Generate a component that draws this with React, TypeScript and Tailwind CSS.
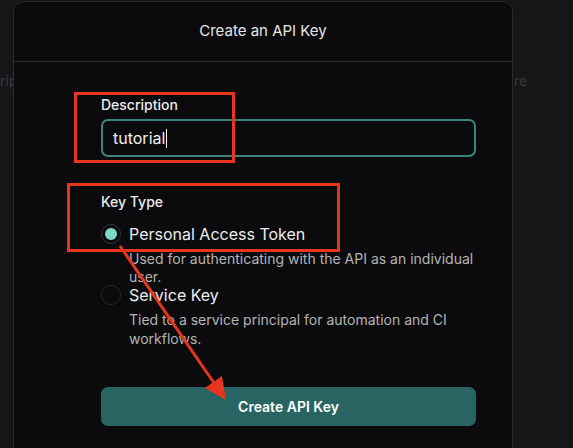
import React from "react";

export default function App() {
  return (
    <div
      className="relative w-[573px] h-[448px] overflow-hidden bg-[#161618]"
      style={{ fontFamily: "Inter, 'Noto Sans', sans-serif" }}
    >
      {/* faint background text behind modal */}
      <span className="absolute left-0 top-[70px] text-[14px] text-[#3a3a3c]">rip</span>
      <span className="absolute left-[514px] top-[70px] text-[14px] text-[#3a3a3c]">re</span>

      {/* modal */}
      <div className="relative ml-[13px] mt-px w-[500px] h-[460px] rounded-t-[10px] border border-[#2a2a2d] bg-[#0b0b0d]">
        <div className="h-[60px] flex items-center justify-center border-b border-[#2a2a2d] text-[15px] text-[#e6e6e6]">
          Create an API Key
        </div>
        <div className="pl-[87px] pr-[36px] pt-[33px] flex flex-col">
          <div className="text-[14px] leading-[20px] font-medium text-[#ececec]">Description</div>
          <div className="mt-[4px] h-[38px] rounded-[7px] border-2 border-[#3a8580] flex items-center pl-[10px] text-[16px] text-[#f0f0f0]">
            tutorial
            <span className="ml-px inline-block w-px h-[19px] bg-white" />
          </div>

          <div className="mt-[35px] text-[14px] leading-[20px] font-medium text-[#ececec]">Key Type</div>
          <div className="mt-[12px] flex items-center h-[20px] gap-[8px]">
            <span className="w-[20px] h-[20px] rounded-full border border-[#2c3a3a] flex items-center justify-center">
              <span className="w-[12px] h-[12px] rounded-full bg-[#7fd8c8]" />
            </span>
            <span className="text-[16px] text-[#ededed]">Personal Access Token</span>
          </div>
          <div className="mt-[6px] pl-[28px] text-[14px] leading-[18px] text-[#b4b4b4] whitespace-nowrap">
            Used for authenticating with the API as an individual
            <br />
            user.
          </div>
          <div className="mt-[-1px] flex items-center h-[20px] gap-[8px]">
            <span className="w-[20px] h-[20px] rounded-full border border-[#242628]" />
            <span className="text-[16px] text-[#ededed]">Service Key</span>
          </div>
          <div className="mt-[5px] pl-[28px] text-[14px] leading-[19px] text-[#b4b4b4] whitespace-nowrap">
            Tied to a service principal for automation and CI
            <br />
            workflows.
          </div>

          <button className="mt-[39px] h-[39px] rounded-[7px] bg-[#286461] text-[14px] font-semibold text-white">
            Create API Key
          </button>
        </div>
      </div>

      {/* annotation overlays */}
      <div className="absolute left-[74px] top-[92px] w-[161px] h-[71px] border-[3px] border-[#e8351d]" />
      <div className="absolute left-[67px] top-[183px] w-[273px] h-[69px] border-[3px] border-[#e8351d]" />
      <svg className="absolute left-0 top-0" width="573" height="448">
        <line x1="120" y1="246" x2="214" y2="383" stroke="#e8351d" strokeWidth="3" />
        <polygon points="226,400 205,388 222,376" fill="#e8351d" />
      </svg>
    </div>
  );
}
